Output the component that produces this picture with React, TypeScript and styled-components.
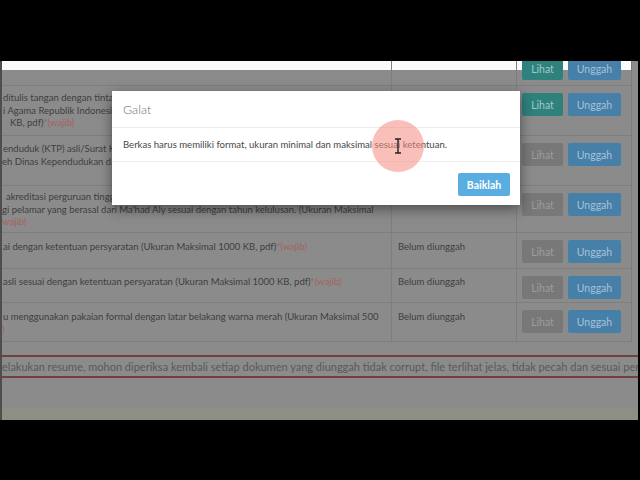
import React from "react";
import styled, { createGlobalStyle } from "styled-components";

const Global = createGlobalStyle`
    html, body {
        margin: 0;
        background: #000;
    }
    body {
        font-family: Lato, "Open Sans", "Liberation Sans", sans-serif;
    }
`;

const Frame = styled.div`
    width: 640px;
    height: 480px;
    padding-top: 61px;
    box-sizing: border-box;
    background: #000;
`;

const Viewport = styled.div`
    position: relative;
    display: flex;
    width: 638px;
    height: 359px;
    overflow: hidden;
    background: #8b8b8b;
`;

const LeftEdge = styled.div`
    width: 2px;
    background: #4e4e4e;
`;

const Content = styled.div`
    width: 636px;
    display: flex;
    flex-direction: column;
`;

const Table = styled.div`
    width: 629px;
    border-right: 1px solid #7c7c7c;
`;

const Row = styled.div<{ $h: number; $band?: boolean }>`
    display: grid;
    grid-template-columns: 390px 125px 113px;
    height: ${p => p.$h}px;
    box-sizing: border-box;
    border-bottom: 1px solid #7e7e7e;
    background: ${p => (p.$band ? "linear-gradient(#fbfbfb 0 9px, transparent 9px)" : "transparent")};
`;

const Desc = styled.div<{ $pt: number }>`
    padding-top: ${p => p.$pt}px;
    border-right: 1px solid #7e7e7e;
    overflow: hidden;
    white-space: nowrap;
    font-size: 9.5px;
    line-height: 12.5px;
    color: #3e3e3e;
`;

const Line = styled.div<{ $indent?: number }>`
    padding-left: ${p => p.$indent ?? 1}px;
`;

const Req = styled.span`
    color: #a3625e;
`;

const Status = styled.div<{ $pt: number }>`
    padding: ${p => p.$pt}px 0 0 6px;
    border-right: 1px solid #7e7e7e;
    font-size: 9.5px;
    line-height: 12.5px;
    color: #3e3e3e;
`;

const Actions = styled.div<{ $shift?: number }>`
    display: flex;
    gap: 5px;
    align-items: flex-start;
    padding: 7px 0 0 5px;
    margin-top: ${p => p.$shift ?? 0}px;
`;

const tones = {
    teal: { bg: "#2e817c", fg: "#a2c9c6" },
    blue: { bg: "#467fa8", fg: "#a6c2d8" },
    gray: { bg: "#787878", fg: "#9c9c9c" },
};

const Btn = styled.div<{ $tone: keyof typeof tones; $w: number }>`
    width: ${p => p.$w}px;
    height: 23px;
    display: flex;
    align-items: center;
    justify-content: center;
    border-radius: 2px;
    background: ${p => tones[p.$tone].bg};
    color: ${p => tones[p.$tone].fg};
    font-size: 10.5px;
`;

const Alert = styled.div`
    margin-top: 13px;
    height: 23px;
    box-sizing: border-box;
    border-top: 2px solid #74403c;
    border-bottom: 2px solid #74403c;
    font-size: 11px;
    line-height: 19px;
    color: #595959;
    white-space: nowrap;
    overflow: hidden;
`;

const Spacer = styled.div`
    flex: 1;
`;

const Footer = styled.div`
    height: 12px;
    background: #8f8e84;
`;

const Modal = styled.div`
    position: absolute;
    left: 112px;
    top: 30px;
    width: 408px;
    background: #fff;
    box-shadow: 0 4px 12px rgba(0, 0, 0, 0.45);
`;

const ModalHeader = styled.div`
    height: 37px;
    box-sizing: border-box;
    padding: 0 11px;
    display: flex;
    align-items: center;
    border-bottom: 1px solid #ececec;
    font-size: 12.5px;
    font-weight: 300;
    color: #707070;
`;

const ModalBody = styled.div`
    height: 33px;
    padding: 0 11px;
    display: flex;
    align-items: center;
    font-size: 9.55px;
    color: #484848;
`;

const ModalFooter = styled.div`
    height: 44px;
    box-sizing: border-box;
    padding: 11px 10px 0 0;
    display: flex;
    justify-content: flex-end;
    align-items: flex-start;
    border-top: 1px solid #efefef;
`;

const OkButton = styled.div`
    width: 52px;
    height: 23px;
    display: flex;
    align-items: center;
    justify-content: center;
    border-radius: 2px;
    background: #5aade0;
    color: #fff;
    font-size: 10.5px;
    font-weight: 700;
`;

const Highlight = styled.div`
    position: absolute;
    left: 372px;
    top: 59px;
    width: 52px;
    height: 52px;
    border-radius: 50%;
    background: rgba(244, 140, 130, 0.55);
    display: flex;
    align-items: center;
    justify-content: center;
`;

const Buttons: React.FC<{ view: "teal" | "gray"; shift?: number }> = ({ view, shift }) => (
    <Actions $shift={shift}>
        <Btn $tone={view} $w={41}>Lihat</Btn>
        <Btn $tone="blue" $w={53}>Unggah</Btn>
    </Actions>
);

export default function App() {
    return (
        <Frame>
            <Global />
            <Viewport>
                <LeftEdge />
                <Content>
                    <Table>
                        <Row $h={25} $band>
                            <Desc $pt={7} />
                            <Status $pt={7} />
                            <Buttons view="teal" shift={-11} />
                        </Row>
                        <Row $h={50}>
                            <Desc $pt={6}>
                                <Line>ditulis tangan dengan tinta hitam di atas kertas bermeterai sesuai format yang</Line>
                                <Line>i Agama Republik Indonesia tentang pernyataan kesediaan ditempatkan</Line>
                                <Line $indent={8}>KB, pdf)<Req>*(wajib)</Req></Line>
                            </Desc>
                            <Status $pt={6}>Sudah diunggah</Status>
                            <Buttons view="teal" />
                        </Row>
                        <Row $h={50}>
                            <Desc $pt={7}>
                                <Line>enduduk (KTP) asli/Surat Keterangan telah melakukan perekaman yang</Line>
                                <Line $indent={0}>eh Dinas Kependudukan dan Pencatatan Sipil</Line>
                            </Desc>
                            <Status $pt={7}>Sudah diunggah</Status>
                            <Buttons view="gray" />
                        </Row>
                        <Row $h={47}>
                            <Desc $pt={5}>
                                <Line $indent={4}>akreditasi perguruan tinggi dan program studi pada saat kelulusan</Line>
                                <Line $indent={0}>gi pelamar yang berasal dari Ma’had Aly sesuai dengan tahun kelulusan. (Ukuran Maksimal</Line>
                                <Line $indent={0}><Req>wajib)</Req></Line>
                            </Desc>
                            <Status $pt={5}>Belum diunggah</Status>
                            <Buttons view="gray" />
                        </Row>
                        <Row $h={36}>
                            <Desc $pt={8}>
                                <Line>ai dengan ketentuan persyaratan (Ukuran Maksimal 1000 KB, pdf)<Req>*(wajib)</Req></Line>
                            </Desc>
                            <Status $pt={8}>Belum diunggah</Status>
                            <Buttons view="gray" />
                        </Row>
                        <Row $h={34}>
                            <Desc $pt={7}>
                                <Line>asli sesuai dengan ketentuan persyaratan (Ukuran Maksimal 1000 KB, pdf)<Req>*(wajib)</Req></Line>
                            </Desc>
                            <Status $pt={7}>Belum diunggah</Status>
                            <Buttons view="gray" />
                        </Row>
                        <Row $h={39}>
                            <Desc $pt={8}>
                                <Line>u menggunakan pakaian formal dengan latar belakang warna merah (Ukuran Maksimal 500</Line>
                                <Line $indent={0}><Req>)</Req></Line>
                            </Desc>
                            <Status $pt={8}>Belum diunggah</Status>
                            <Buttons view="gray" />
                        </Row>
                    </Table>
                    <Alert>
                        elakukan resume, mohon diperiksa kembali setiap dokumen yang diunggah tidak corrupt, file terlihat jelas, tidak pecah dan sesuai persyaratan.
                    </Alert>
                    <Spacer />
                    <Footer />
                </Content>
                <Modal>
                    <ModalHeader>Galat</ModalHeader>
                    <ModalBody>Berkas harus memiliki format, ukuran minimal dan maksimal sesuai ketentuan.</ModalBody>
                    <ModalFooter>
                        <OkButton>Baiklah</OkButton>
                    </ModalFooter>
                </Modal>
                <Highlight>
                    <svg width="8" height="16" viewBox="0 0 8 16">
                        <path d="M1 1h6M1 15h6M4 1v14" stroke="#222" strokeWidth="1.4" fill="none" />
                    </svg>
                </Highlight>
            </Viewport>
        </Frame>
    );
}
